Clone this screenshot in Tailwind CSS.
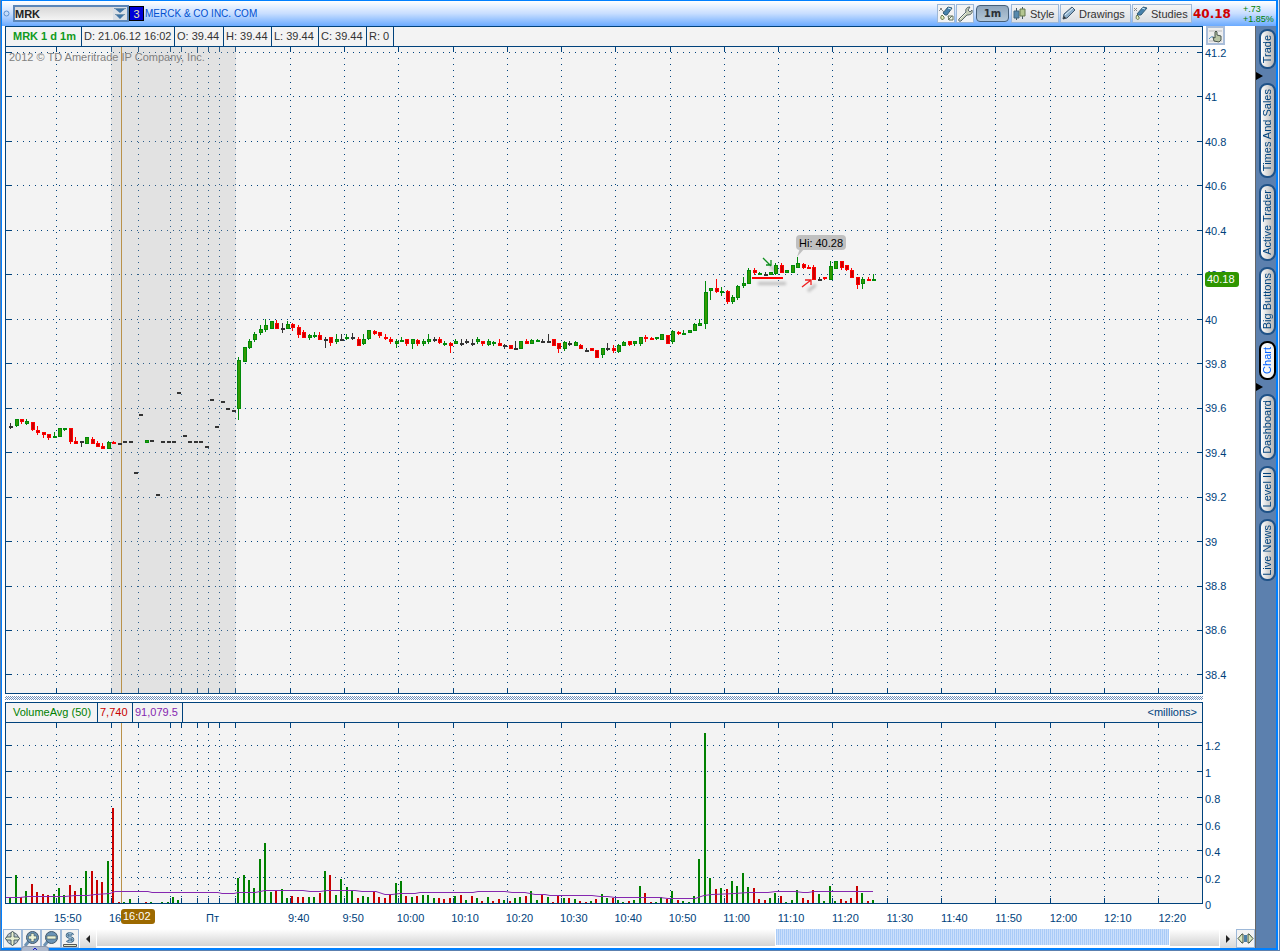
<!DOCTYPE html>
<html lang="en">
<head>
    <meta charset="UTF-8">
    <meta name="viewport" content="width=device-width, initial-scale=1.0">
    <title>MRK - Merck &amp; Co Inc. Com</title>
    <script src="https://cdn.jsdelivr.net/npm/@tailwindcss/browser@4"></script>
</head>
<body class="h-screen overflow-hidden bg-white font-['Liberation_Sans',Arial,sans-serif] text-[11px] leading-[12px] text-[#00427c]">
<div class="h-full border-x border-b border-[#5c80ae] bg-[#dbe6f4] pr-px">
<div class="relative flex h-full flex-col border-t border-b-2 border-l border-r-2 border-[#0080ff] bg-white">

    <!-- Symbol bar -->
    <header class="flex h-[25px] shrink-0 items-center bg-linear-to-b from-white via-[#c8deff] to-[#6aaaff] pl-px">
        <svg class="mr-[3px] size-[7px]" viewBox="0 0 7 7"><circle cx="3.5" cy="3.5" r="2.5" fill="#c4dcfa" stroke="#5a8fd0"/></svg>
        <div class="flex h-[17px] border-2 border-[#5b86b8] bg-linear-to-b from-[#d8d8d8] to-[#f4f4f4]">
            <input type="text" value="MRK" aria-label="Symbol" class="w-[98px] bg-transparent font-bold text-[#222] outline-none">
            <button aria-label="Recent symbols" class="w-[14px] bg-[#d9dfe6]">
                <svg class="h-[13px] w-[14px]" viewBox="0 0 14 13"><path d="M1 1h12L7 6zM2 7h10L7 12z" fill="#3f74a5"/><path d="M1 1.5h12M2 7.5h10" stroke="#7393ae"/></svg>
            </button>
        </div>
        <button aria-label="Link group 3" class="h-[15px] w-[15px] border border-black bg-[#0000d8] text-[#e8e8b0]">3</button>
        <h1 class="ml-px text-[10px] text-[#0050d0]">MERCK &amp; CO INC. COM</h1>

        <div class="ml-auto flex h-[19px] items-stretch gap-px text-[#333]">
            <button aria-label="Pick style" class="w-[18px] border border-[#9db8d8] bg-[#f3f3f3]">
                <svg class="size-[16px]" viewBox="0 0 16 16"><path d="M2 2l4 4M1 5l3-3" stroke="#888"/><path d="M5 7l5-6 4 1-5 7-2 0z" fill="#4681ac" stroke="#345e78"/><path d="M10 2l3 1" stroke="#cceeff"/><path d="M4 9c-4 5 3 6 2 2z" fill="#e5efc0" stroke="#66764b"/><path d="M10 10h5v4h-4zM10 14l4-4" fill="#eef5e6" stroke="#63735e"/></svg>
            </button>
            <button aria-label="Chart settings" class="w-[18px] border border-[#9db8d8] bg-[#f3f3f3]">
                <svg class="size-[16px]" viewBox="0 0 16 16"><path d="M2 13l7-7c-1-3 1-5 4-5l-2 3 2 2 2-2c1 4-2 5-5 5l-6 6c-2 1-3-1-2-2z" fill="#c6ceb8" stroke="#59686d"/><path d="M3 13l6-6" stroke="#f3f7e6"/></svg>
            </button>
            <button class="mx-px my-px w-[33px] rounded-[4px] border border-[#46607a] bg-linear-to-b from-[#8fa6bc] to-[#b5c8d8] font-['DejaVu_Sans',sans-serif] text-[10px] font-bold text-[#2b2f36]">1m</button>
            <button class="flex w-[48px] items-center gap-[3px] border border-[#9db8d8] bg-linear-to-b from-[#f5f5f5] to-[#dcdfe3]">
                <svg class="size-[15px]" viewBox="0 0 15 15"><path d="M4.500 2v12M10.500 1v12" stroke="#455a66"/><path d="M2 5h5v7H2z" fill="#5689ad" stroke="#41667e"/><path d="M8 3h5v7H8z" fill="#b4c690" stroke="#64764d"/></svg>Style
            </button>
            <button class="flex w-[71px] items-center gap-[3px] border border-[#9db8d8] bg-linear-to-b from-[#f5f5f5] to-[#dcdfe3]">
                <svg class="size-[15px]" viewBox="0 0 15 15"><path d="M2 13l1-5 8-7 3 3-8 8z" fill="#8eb0cb" stroke="#3e5870"/><path d="M4 9l8-7" stroke="#e4f4ff"/><path d="M2 13l1-3 2 2z" fill="#333"/></svg>Drawings
            </button>
            <button class="flex w-[60px] items-center gap-[3px] border border-[#9db8d8] bg-linear-to-b from-[#f5f5f5] to-[#dcdfe3]">
                <svg class="size-[15px]" viewBox="0 0 15 15"><path d="M1 2l3 3M1 5l3-3" stroke="#888"/><path d="M4 8l6-7 4 1-6 7-3 0z" fill="#4681ac" stroke="#345e78"/><path d="M9 2l3 1" stroke="#cceeff"/><path d="M4 9c-3 5 3 6 2 2z" fill="#e5efc0" stroke="#66764b"/></svg>Studies
            </button>
        </div>
        <strong class="ml-px w-[50px] font-['DejaVu_Sans',sans-serif] text-[12px] text-[#d00000]">40.18</strong>
        <div class="w-[33px] text-[9px] leading-[10px] text-[#008000]">+.73<br>+1.85%</div>
    </header>

    <div class="flex min-h-0 flex-1">
        <main class="flex min-w-0 flex-1 flex-col">

            <!-- Price pane -->
            <section class="flex min-h-0 flex-1 pl-[3px]">
                <div class="flex min-w-0 flex-1 flex-col border border-[#00427c] bg-[#f3f3f3]">
                    <div class="flex h-[20px] shrink-0 items-stretch border-b border-[#00427c] leading-[18px] text-[#333]">
                        <span class="w-[76px] border-r border-[#00427c] pl-[7px] font-bold text-[#109a20]">MRK 1 d 1m</span>
                        <span class="w-[93px] border-r border-[#00427c] pl-[2px]">D: 21.06.12 16:02</span>
                        <span class="w-[49px] border-r border-[#00427c] pl-[2px]">O: 39.44</span>
                        <span class="w-[48px] border-r border-[#00427c] pl-[2px]">H: 39.44</span>
                        <span class="w-[47px] border-r border-[#00427c] pl-[2px]">L: 39.44</span>
                        <span class="w-[48px] border-r border-[#00427c] pl-[2px]">C: 39.44</span>
                        <span class="w-[27px] border-r border-[#00427c] pl-[2px]">R: 0</span>
                    </div>
                    <div class="relative min-h-0 flex-1">
                        <svg id="priceChart" class="block h-full w-full" viewBox="6 47 1196 646" preserveAspectRatio="none" shape-rendering="crispEdges"></svg>
                        <p class="absolute top-[4px] left-[3px] text-[#808080]">2012 © TD Ameritrade IP Company, Inc.</p>
                    </div>
                </div>
                <div class="flex w-[52px] flex-col pl-[2px]">
                    <div class="h-[21px] shrink-0 pl-px">
                        <button aria-label="Auto scale" class="h-[19px] w-[19px] border-2 border-[#a9bdd9] bg-[#eeeeee]">
                            <svg class="size-[15px]" viewBox="0 0 15 15"><path d="M1 3h13M1 13h13" stroke="#bbb"/><path d="M1 11q3-4 5-1" fill="none" stroke="#4589bf"/><path d="M6 13L5 9l2 1V4l1-1 1 1v3l4 1v4l-2 2z" fill="#b9c5a5" stroke="#47544c"/></svg>
                        </button>
                    </div>
                    <div class="relative flex min-h-0 flex-1 flex-col justify-between pb-[13px]">
                        <span>41.2</span><span>41</span><span>40.8</span><span>40.6</span><span>40.4</span><span>40.2</span><span>40</span><span>39.8</span><span>39.6</span><span>39.4</span><span>39.2</span><span>39</span><span>38.8</span><span>38.6</span><span>38.4</span>
                        <b class="absolute top-[225px] left-0 w-[34px] rounded-[3px] bg-[#2f9600] pl-[2px] leading-[15px] font-normal text-white">40.18</b>
                    </div>
                </div>
            </section>

            <!-- Splitter -->
            <div class="h-[8px] shrink-0 py-[2px] pr-[52px] pl-[3px]">
                <div class="h-[4px] bg-[repeating-conic-gradient(#6f8fb8_0_25%,#ffffff_0_50%)] bg-[length:2px_2px]"></div>
            </div>

            <!-- Volume pane -->
            <section class="flex h-[202px] shrink-0 pl-[3px]">
                <div class="flex min-w-0 flex-1 flex-col border border-[#00427c] bg-[#f3f3f3]">
                    <div class="flex h-[20px] shrink-0 items-stretch border-b border-[#00427c] leading-[18px]">
                        <span class="w-[92px] border-r border-[#00427c] pl-[7px] text-[#008000]">VolumeAvg (50)</span>
                        <span class="w-[35px] border-r border-[#00427c] pl-[2px] text-[#c80000]">7,740</span>
                        <span class="w-[50px] border-r border-[#00427c] pl-[2px] text-[#8527b0]">91,079.5</span>
                        <span class="ml-auto pr-[5px]">&lt;millions&gt;</span>
                    </div>
                    <svg id="volumeChart" class="block min-h-0 w-full flex-1" viewBox="6 723 1196 180" preserveAspectRatio="none" shape-rendering="crispEdges"></svg>
                </div>
                <div class="flex w-[52px] flex-col pt-[38px] pl-[2px]">
                    <div class="-mb-[7px] flex flex-1 flex-col justify-between">
                        <span>1.2</span><span>1</span><span>0.8</span><span>0.6</span><span>0.4</span><span>0.2</span><span>0</span>
                    </div>
                </div>
            </section>

            <!-- Time axis -->
            <div class="flex h-[25px] shrink-0 items-center pt-[3px] pr-[42px] pl-[52px]">
                <span class="w-[55px]">15:50</span>
                <span class="relative w-[97px]">16:00
                    <b class="absolute -top-[3px] left-[12px] w-[34px] rounded-[3px] bg-[#9c6900] pl-[2px] leading-[15px] font-normal text-white">16:02</b>
                </span>
                <span class="w-[82px]">Пт</span>
                <div class="flex flex-1">
                    <span class="flex-1">9:40</span><span class="flex-1">9:50</span><span class="flex-1">10:00</span><span class="flex-1">10:10</span><span class="flex-1">10:20</span><span class="flex-1">10:30</span><span class="flex-1">10:40</span><span class="flex-1">10:50</span><span class="flex-1">11:00</span><span class="flex-1">11:10</span><span class="flex-1">11:20</span><span class="flex-1">11:30</span><span class="flex-1">11:40</span><span class="flex-1">11:50</span><span class="flex-1">12:00</span><span class="flex-1">12:10</span><span class="flex-1">12:20</span>
                </div>
            </div>

            <!-- Zoom buttons and scroll bar -->
            <footer class="flex h-[19px] shrink-0 items-stretch pl-px">
                <button aria-label="Pan" class="w-[19px] border border-[#9db8d8] bg-[#f3f3f3]">
                    <svg class="size-[17px]" viewBox="0 0 17 17"><circle cx="8.500" cy="8.500" r="6" fill="#b9c6ce" stroke="#5a6a74"/><path d="M8.500 1l1.500 2v4h4l2 1.500-2 1.500h-4v4l-1.500 2L7 14v-4H3L1 8.500 3 7h4V3z" fill="#e6eecf" stroke="#34464f" stroke-width=".8"/></svg>
                </button>
                <button aria-label="Zoom in" class="w-[19px] border border-[#9db8d8] bg-[#f3f3f3]">
                    <svg class="size-[17px]" viewBox="0 0 17 17"><path d="M2 16l4-5" stroke="#6f94b5" stroke-width="3"/><circle cx="9.500" cy="7.500" r="6" fill="#6b93b5" stroke="#42586a"/><path d="M8 3.500h3V6h2.500v3H11v2.500H8V9H5.500V6H8z" fill="#eef3d4" stroke="#475a5a" stroke-width=".6"/></svg>
                </button>
                <button aria-label="Zoom out" class="w-[20px] border border-[#9db8d8] bg-[#f3f3f3]">
                    <svg class="size-[17px]" viewBox="0 0 17 17"><path d="M2 16l4-5" stroke="#6f94b5" stroke-width="3"/><circle cx="9.500" cy="7.500" r="6" fill="#6b93b5" stroke="#42586a"/><path d="M5 6h9v3H5z" fill="#eef3d4" stroke="#475a5a" stroke-width=".6"/></svg>
                </button>
                <button aria-label="Price scale" class="w-[18px] border border-[#9db8d8] bg-[#f3f3f3]">
                    <svg class="size-[16px]" viewBox="0 0 16 16"><path d="M11 4c-1-2-6-2-6 .5 0 2.500 6 1.500 6 4S6 11 5 9.500M8 1v11" fill="none" stroke="#3c6485" stroke-width="2.600"/><path d="M11 4c-1-2-6-2-6 .5 0 2.500 6 1.500 6 4S6 11 5 9.500M8 1v11" fill="none" stroke="#a9c9e0"/><path d="M1.500 13.500h13v2h-13z" fill="#e4eacb" stroke="#555"/></svg>
                </button>
                <div class="flex flex-1 items-stretch gap-px pl-px">
                    <button aria-label="Scroll left" class="w-[16px] bg-linear-to-b from-white to-[#d8d8d8]">
                        <svg class="h-[16px] w-[16px]" viewBox="0 0 16 16"><path d="M10 4v8L6 8z" fill="#222"/></svg>
                    </button>
                    <div class="h-[17px] flex-[679] bg-linear-to-b from-white to-[#d4d4d4]"></div>
                    <div class="h-[16px] flex-[393] bg-[repeating-linear-gradient(90deg,#a9cbf7_0_1px,#cbdffb_1px_2px)]"></div>
                    <div class="h-[17px] flex-[49] bg-linear-to-b from-white to-[#d4d4d4]"></div>
                    <button aria-label="Scroll right" class="w-[16px] bg-linear-to-b from-white to-[#d8d8d8]">
                        <svg class="h-[16px] w-[16px]" viewBox="0 0 16 16"><path d="M6 4v8l4-4z" fill="#222"/></svg>
                    </button>
                </div>
                <button aria-label="Fit to width" class="w-[19px] border border-[#9db8d8] bg-[#f3f3f3]">
                    <svg class="size-[17px]" viewBox="0 0 17 17"><path d="M6 4v9H5L1 8.500 5 4zM11 4v9h1l4-4.500L12 4z" fill="#dbe8bd" stroke="#3f4f40"/><path d="M8.500 5v7" stroke="#4a80a8" stroke-width="3"/></svg>
                </button>
            </footer>
        </main>

        <!-- Gadget tabs -->
        <nav class="flex w-[21px] shrink-0 flex-col border-l border-[#666666] bg-[#5c80ae] pt-[3px]">
            <button class="ml-[3px] h-[40px] w-[17px] rounded-[8px] border-2 border-[#1f5288] bg-linear-to-r from-white to-[#b4b4b4]"><span class="block rotate-180 leading-[13px] [writing-mode:vertical-rl]">Trade</span></button>
            <svg class="h-[14px] w-[8px]" viewBox="0 0 8 14"><path d="M0 3v8l7-4z" fill="#000"/></svg>
            <button class="ml-[3px] h-[95px] w-[17px] rounded-[8px] border-2 border-[#1f5288] bg-linear-to-r from-white to-[#b4b4b4]"><span class="block rotate-180 leading-[13px] [writing-mode:vertical-rl] whitespace-nowrap">Times And Sales</span></button>
            <button class="mt-[6px] ml-[3px] h-[77px] w-[17px] rounded-[8px] border-2 border-[#1f5288] bg-linear-to-r from-white to-[#b4b4b4]"><span class="block rotate-180 leading-[13px] [writing-mode:vertical-rl] whitespace-nowrap">Active Trader</span></button>
            <button class="mt-[6px] ml-[3px] h-[68px] w-[17px] rounded-[8px] border-2 border-[#1f5288] bg-linear-to-r from-white to-[#b4b4b4]"><span class="block rotate-180 leading-[13px] [writing-mode:vertical-rl] whitespace-nowrap">Big Buttons</span></button>
            <button class="mt-[6px] ml-[3px] h-[39px] w-[17px] rounded-[8px] border-2 border-black bg-linear-to-r from-white to-[#eeeeee] text-[#0060ff]"><span class="block rotate-180 leading-[13px] [writing-mode:vertical-rl]">Chart</span></button>
            <svg class="h-[14px] w-[8px]" viewBox="0 0 8 14"><path d="M0 3v8l7-4z" fill="#000"/></svg>
            <button class="ml-[3px] h-[66px] w-[17px] rounded-[8px] border-2 border-[#1f5288] bg-linear-to-r from-white to-[#b4b4b4]"><span class="block rotate-180 leading-[13px] [writing-mode:vertical-rl]">Dashboard</span></button>
            <button class="mt-[6px] ml-[3px] h-[47px] w-[17px] rounded-[8px] border-2 border-[#1f5288] bg-linear-to-r from-white to-[#b4b4b4]"><span class="block rotate-180 leading-[13px] [writing-mode:vertical-rl] whitespace-nowrap">Level II</span></button>
            <button class="mt-[6px] ml-[3px] h-[62px] w-[17px] rounded-[8px] border-2 border-[#1f5288] bg-linear-to-r from-white to-[#b4b4b4]"><span class="block rotate-180 leading-[13px] [writing-mode:vertical-rl] whitespace-nowrap">Live News</span></button>
        </nav>
    </div>

    <!-- Pull-up handle on the bottom edge -->
    <button aria-label="Open panel" class="absolute -bottom-[3px] left-[19px] h-[5px] w-[28px] rounded-t-[4px] border-x border-t border-[#8d98ac] bg-[#aeb9cc]">
        <svg class="mx-auto h-[4px] w-[6px]" viewBox="0 0 6 4"><path d="M1 3l2-2 2 2" fill="none" stroke="#1010d0"/></svg>
    </button>
</div>
</div>

<script>
    const NAVY = '#00427c';
    const verticals = [56, 111, 138, 170, 181, 197, 208, 219, 235, 290, 344, 398, 453, 507, 561, 615, 670, 724, 778, 832, 887, 941, 995, 1050, 1104, 1158];
    const priceLines = [52, 96, 141, 185, 230, 274, 319, 363, 408, 452, 497, 541, 586, 630, 674];
    const volumeLines = [745, 771, 797, 824, 850, 877];

    // x, colour, body top, body bottom, high, low
    const candles = `9 d 426 428 423 429,15 g 419 426 419 427,20 r 419 422 419 424,25 g 421 424 419 425,31 r 422 430 422 431,36 r 430 433 426 435,42 r 432 435 432 438,47 r 434 438 434 440,53 g 436 438 432 438,58 g 428 437 428 437,63 g 428 430 428 431,69 r 428 442 428 444,74 r 441 444 437 444,80 d 441 443 441 447,85 g 437 444 437 444,91 r 439 444 437 444,96 r 443 447 441 447,101 r 446 449 443 449,107 g 442 449 441 449,112 r 442 444 441 444,
118 d 443 445,123 d 441 443,129 d 441 443,134 d 472 474,139 d 414 416,145 g 440 443,150 d 440 442,156 d 494 496,161 d 441 443,167 d 441 443,172 d 441 443,177 d 392 394,183 d 435 437,188 d 441 443,194 d 441 443,199 d 441 443,205 d 446 448,210 d 399 401,215 d 426 428,221 d 401 403,226 d 408 410,232 d 410 412,
237 g 360 409 357 420,243 g 347 362,248 g 341 348 339 349,253 g 334 340 332 342,259 g 329 333 325 335,264 g 325 330 319 332,270 g 321 329,275 r 323 329 320 329,281 d 328 330 323 333,286 g 324 329 321 329,291 r 324 328 323 331,297 r 327 335 325 338,302 r 332 338 330 338,308 g 335 338 334 340,313 g 335 337 332 338,318 r 335 340 332 340,324 d 339 341 337 348,329 r 337 343 337 346,335 g 339 342 334 344,340 d 339 341 334 341,345 g 337 339 334 340,351 d 337 339 333 340,357 r 339 346 337 346,362 g 339 344 334 345,367 g 330 339 330 340,373 r 331 334 330 335,378 r 332 336 332 338,384 r 337 339 334 340,389 r 339 342 337 344,395 g 341 344 339 348,400 g 340 342 337 342,405 r 339 344 339 346,411 g 339 344 339 349,416 r 340 344 339 346,422 g 341 344 339 346,427 g 339 342 334 344,433 d 339 341 337 342,438 r 339 343 337 344,443 g 343 345 341 346,449 r 343 346 342 353,454 g 341 344 339 344,460 d 343 345 339 346,465 d 341 343 339 344,471 d 343 345 339 346,476 g 339 342 337 344,481 r 341 344 341 346,487 g 341 345 339 346,492 g 342 344 341 346,498 r 343 346 339 346,503 d 345 347 344 349,509 r 345 349,514 d 348 350 341 350,519 g 341 349,525 r 341 344 339 344,530 g 340 344 339 344,536 g 340 342 339 342,541 d 341 343 339 343,547 d 341 343 334 343,552 r 339 346,557 r 343 349 343 353,563 g 342 349 341 351,568 d 343 345 341 346,574 g 342 346 341 346,579 r 345 349 344 349,585 d 350 352 348 352,590 r 348 351,595 r 350 358,601 g 348 355 348 358,606 d 348 350 343 351,612 r 348 351 345 353,617 g 345 352 344 353,622 g 342 346 341 346,628 r 341 345 341 346,633 g 341 344 341 346,639 g 337 344 337 346,644 r 337 339 335 342,650 r 338 340 337 340,655 g 337 339 337 340,660 g 334 340,666 r 335 344,671 g 331 342 330 344,677 r 332 334 331 335,682 g 333 335 330 335,688 g 330 333,693 g 324 331 323 331,698 g 323 326 319 326,704 g 292 324 281 329,709 g 288 291 288 300,715 r 288 292 279 293,720 g 291 293 287 296,726 r 291 302 290 304,731 g 297 302 295 304,736 g 286 298 285 300,742 g 283 286 277 288,747 g 270 284 268 284,753 r 270 273 268 275,758 g 273 275 272 275,764 d 274 276 272 276,769 g 272 275,774 g 265 274 263 275,780 r 265 273 263 273,785 g 270 273,791 g 265 273,796 g 263 268 257 268,802 r 264 268 263 269,807 r 267 269 265 269,812 r 267 280 265 280,818 d 279 281 277 281,823 r 277 279 277 280,829 g 266 280 261 280,834 g 261 269,840 r 261 268 261 270,845 r 265 270 265 271,850 r 270 278 268 278,856 r 277 285 277 289,861 g 279 284 277 289,867 r 279 281 277 281,872 g 279 281 274 281`;

    // x, colour, bar top
    const volumes = `9 g 898,15 g 875,20 r 897,25 g 891,31 r 884,36 r 892,42 r 894,47 r 895,53 g 894,58 g 888,63 g 895,69 r 885,74 r 891,80 g 888,85 g 871,91 r 871,96 r 880,101 r 882,107 g 861,112 r 808,118 r 902,123 g 902,129 g 899,145 r 902,150 g 902,161 g 902,167 g 902,172 g 897,177 g 900,
237 g 878,243 g 875,248 g 880,253 g 888,259 g 859,264 g 843,270 g 892,275 r 890,281 g 889,286 g 898,291 r 896,297 r 897,302 r 897,308 g 897,313 g 897,319 r 893,324 g 871,329 r 875,335 g 895,340 g 879,346 g 887,351 g 890,357 r 898,362 g 896,367 g 897,373 r 891,378 r 897,384 r 898,389 r 895,395 g 883,400 g 881,405 r 896,411 g 897,416 r 896,422 g 895,427 g 895,433 g 898,438 r 898,443 r 899,449 r 898,454 g 896,460 r 895,465 g 900,471 r 896,476 g 898,481 r 901,487 g 897,492 r 901,498 r 899,503 g 900,509 r 901,514 g 898,519 g 897,525 r 896,530 g 891,536 g 900,541 r 895,547 g 897,552 r 902,557 r 896,563 g 898,568 r 898,574 g 899,579 r 901,585 r 902,590 g 901,595 r 899,601 g 894,606 g 898,612 r 898,617 g 900,622 g 902,628 r 901,633 g 900,639 g 886,644 r 893,650 r 902,655 g 902,660 g 897,666 r 899,671 g 891,677 r 900,682 g 901,688 g 902,693 g 896,698 g 859,704 g 733,709 g 878,715 r 889,720 g 888,726 r 889,731 g 881,736 g 886,742 g 873,747 g 887,753 r 888,758 r 899,764 r 900,769 g 898,774 g 893,780 r 896,785 g 902,791 g 900,796 g 890,802 r 898,807 r 900,812 r 890,818 g 894,823 g 901,829 g 886,834 g 901,840 r 899,845 r 901,850 r 898,856 r 886,861 g 893,867 r 901,872 g 900`;

    const average = '6,897 20,897 28,896 65,896 75,895 88,895 95,894 110,893 115,891 148,891 152,892 218,892 222,893 234,893 238,892 255,892 265,890 303,890 310,891 320,891 327,890 355,890 362,891 376,891 385,894 392,894 400,893 415,893 420,892 473,892 478,891 505,891 512,892 525,892 535,894 545,894 550,895 592,895 600,896 608,896 615,897 660,897 668,898 695,898 704,895 712,894 735,893 748,892 768,892 776,891 795,891 803,892 808,892 814,891 873,891';

    const edge = { g: '#008a0a', r: '#ff0000', d: '#333333' };
    const core = { g: '#339900', r: '#c80000', d: '#333333' };

    function rect(x, y, w, h, fill) {
        return `<rect x="${x}" y="${y}" width="${w}" height="${h}" fill="${fill}"/>`;
    }

    // Dots every 6px, with solid ticks along the frame
    function grid(top, bottom, firstDot, rows) {
        let out = '';
        for (const x of verticals) {
            for (let y = firstDot; y < bottom - 6; y += 6) out += rect(x, y, 1, 1, NAVY);
            out += rect(x, top, 1, 5, NAVY) + rect(x, bottom - 5, 1, 5, NAVY);
        }
        for (const y of rows) {
            for (let x = 17; x <= 1189; x += 6) out += rect(x, y, 1, 1, NAVY);
            out += rect(6, y, 6, 1, NAVY) + rect(1197, y, 5, 1, NAVY);
        }
        return out;
    }

    function records(text) {
        return text.split(',').map(r => r.trim().split(' ').map(v => isNaN(v) ? v : Number(v)));
    }

    let price = grid(47, 693, 58, priceLines);
    price += '<rect x="111" y="47" width="125" height="646" fill="#afafaf" fill-opacity=".25"/>';
    price += rect(121, 47, 1, 646, '#b99149');
    price += `<defs><filter id="soft" x="-50%" y="-200%" width="200%" height="500%"><feGaussianBlur stdDeviation="1.500"/></filter></defs>
        <g stroke="#bdbdbd" fill="none" stroke-width="3" filter="url(#soft)"><path d="M758 283h28M770 266l8 6M808 291l8-6"/></g>`;
    for (const [x, c, top, bottom, high = top, low = bottom] of records(candles)) {
        price += rect(x + 1, high, 1, low - high, edge[c]) + rect(x, top, 4, bottom - top, edge[c]);
        if (bottom - top > 2) price += rect(x + 1, top + 1, 2, bottom - top - 2, core[c]);
    }
    price += rect(752, 277, 31, 2, '#ff0000');
    price += `<g fill="none" shape-rendering="auto" stroke-width="1.300"><path d="M763 258l8 8m-5-1h5v-5" stroke="#109020"/><path d="M802 287l9-7m-6 0h6v5" stroke="#f02020"/></g>
        <g shape-rendering="auto"><path d="M800 248h5l-8 9z" fill="#c0c0c0"/><rect x="796" y="235" width="50" height="15" rx="4" fill="#c0c0c0"/></g>
        <text x="799" y="247" font-size="11" fill="#000">Hi: 40.28</text>`;
    document.getElementById('priceChart').innerHTML = price;

    let volume = grid(723, 903, 734, volumeLines);
    volume += rect(121, 723, 1, 180, '#b99149');
    for (const [x, c, top] of records(volumes)) {
        volume += rect(x, top, 2, 903 - top, c === 'g' ? '#008000' : '#c80000');
    }
    volume += `<polyline points="${average}" fill="none" stroke="#8527b0" shape-rendering="auto" transform="translate(0 .5)"/>`;
    document.getElementById('volumeChart').innerHTML = volume;
</script>
</body>
</html>
